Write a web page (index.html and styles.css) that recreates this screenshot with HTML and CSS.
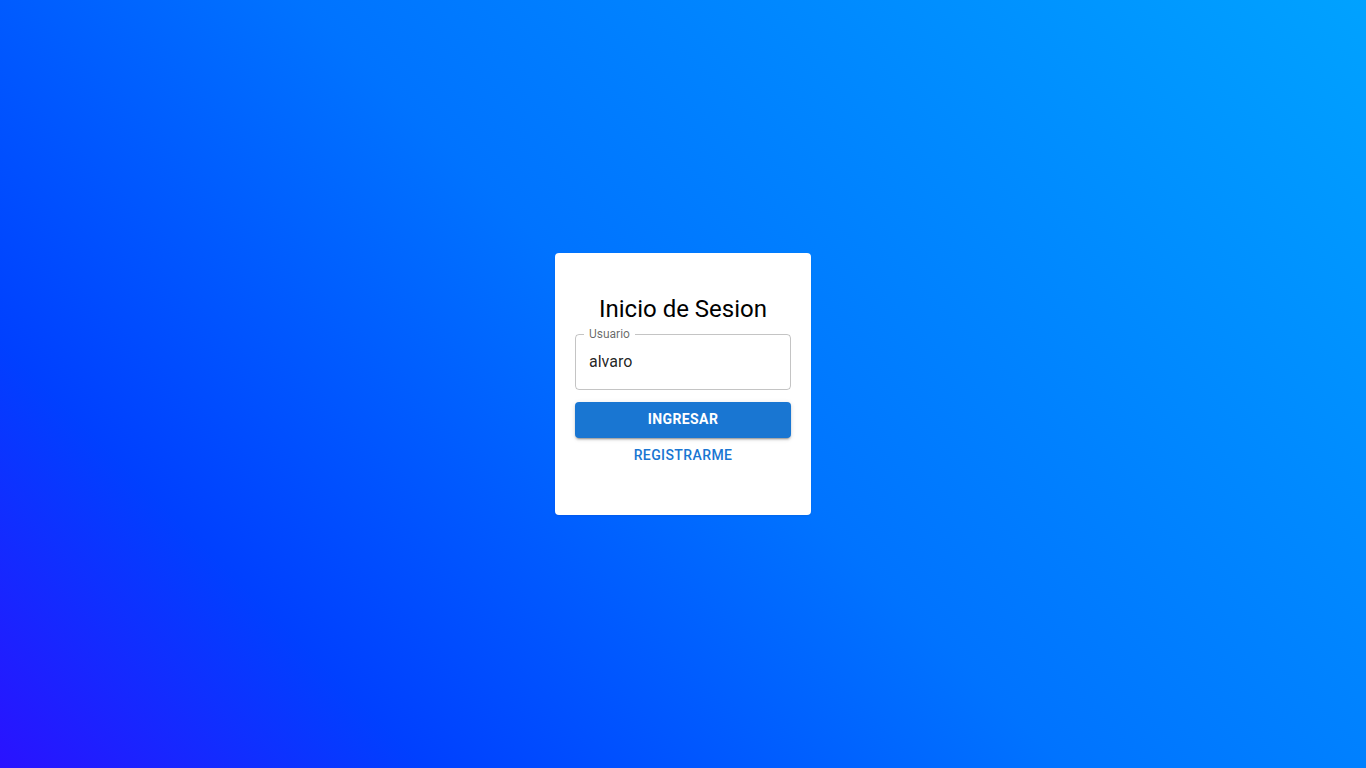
FILE: index.html
```html
<!DOCTYPE html>
<html lang="es">
<head>
<meta charset="utf-8">
<title>Inicio de Sesion</title>
<link rel="stylesheet" href="styles.css">
</head>
<body>
<main class="page">
  <form class="card">
    <h1 class="title">Inicio de Sesion</h1>
    <div class="field">
      <label class="field-label" for="user">Usuario</label>
      <input class="field-input" id="user" type="text" value="alvaro">
    </div>
    <button type="button" class="btn-primary">Ingresar</button>
    <button type="button" class="btn-text">Registrarme</button>
  </form>
</main>
</body>
</html>
```
FILE: styles.css
```css
* { box-sizing: border-box; }
html, body {
  margin: 0;
  height: 100%;
}
body {
  font-family: Roboto, "Liberation Sans", Arial, sans-serif;
  background: linear-gradient(45deg, #2a12ff 0%, #0040ff 20%, #0073ff 50%, #00a2ff 100%);
}
.page {
  height: 100vh;
  display: flex;
  align-items: center;
  justify-content: center;
}
.card {
  width: 256px;
  background: #fff;
  border-radius: 4px;
  padding: 40px 20px 41px;
  display: flex;
  flex-direction: column;
  box-shadow: 0 1px 2px 0 rgba(0,0,0,0.08);
}
.title {
  margin: 0;
  font-size: 24px;
  line-height: 32px;
  font-weight: 400;
  text-align: center;
  color: #000;
}
.field {
  position: relative;
  margin-top: 9px;
  height: 56px;
  border: 1px solid rgba(0,0,0,0.23);
  border-radius: 4px;
  display: flex;
  align-items: center;
  padding-bottom: 2px;
}
.field-label {
  position: absolute;
  left: 8px;
  top: -8px;
  padding: 0 5px;
  background: #fff;
  font-size: 12px;
  line-height: 15px;
  color: rgba(0,0,0,0.6);
}
.field-input {
  width: 100%;
  border: 0;
  outline: none;
  background: transparent;
  padding: 0 13px;
  font-family: inherit;
  font-size: 16px;
  line-height: 19px;
  color: rgba(0,0,0,0.87);
}
.btn-primary {
  margin-top: 12px;
  height: 36px;
  padding: 0 0 2px;
  border: 0;
  border-radius: 4px;
  background: #1976d2;
  color: #fff;
  font-family: inherit;
  font-size: 14px;
  font-weight: 700;
  letter-spacing: 0.4px;
  text-transform: uppercase;
  box-shadow: 0 3px 1px -2px rgba(0,0,0,0.2), 0 2px 2px 0 rgba(0,0,0,0.14), 0 1px 5px 0 rgba(0,0,0,0.12);
}
.btn-text {
  height: 36px;
  padding: 0 0 2px;
  border: 0;
  background: transparent;
  color: #1976d2;
  font-family: inherit;
  font-size: 14px;
  font-weight: 500;
  letter-spacing: 0.4px;
  text-transform: uppercase;
}
```
